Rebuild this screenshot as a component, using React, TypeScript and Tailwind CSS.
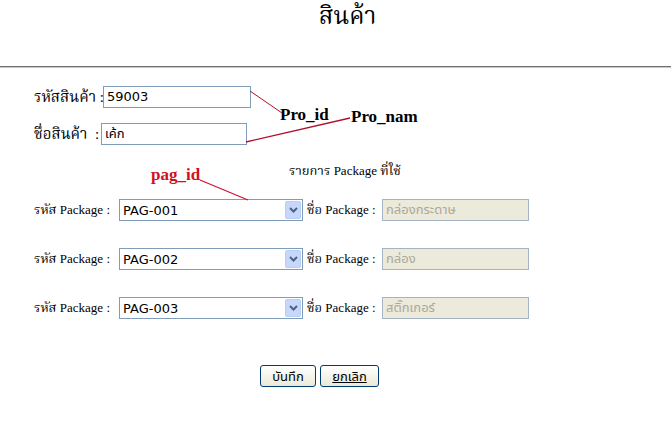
import React from "react";

const thaiSerif = { fontFamily: '"Liberation Serif", "Noto Serif Thai", "Noto Sans Thai", serif' };
const sans = { fontFamily: 'Tahoma, "DejaVu Sans", "Liberation Sans", "Noto Sans Thai", sans-serif' };

function Select({ value }: { value: string }) {
  return (
    <div className="flex items-center w-[184px] h-[22px] border border-[#7f9db9] bg-white pl-[3px] pr-[1px]">
      <span className="flex-1 text-[13px] text-black leading-none" style={sans}>{value}</span>
      <span className="flex items-center justify-center w-[16px] h-[18px] rounded-[2px] border border-[#b9cdf5] bg-[#c6d7fb]">
        <svg width="9" height="6" viewBox="0 0 9 6">
          <path d="M1 1 L4.5 4.5 L8 1" stroke="#4d6185" strokeWidth="2" fill="none" />
        </svg>
      </span>
    </div>
  );
}

function PkgRow({ id, name }: { id: string; name: string }) {
  return (
    <div className="flex items-center h-[22px]">
      <span className="text-[13px] w-[85px] whitespace-nowrap" style={thaiSerif}>รหัส Package :</span>
      <Select value={id} />
      <span className="text-[13px] ml-[4px] w-[75px] whitespace-nowrap" style={thaiSerif}>ชื่อ Package :</span>
      <div
        className="flex items-center w-[147px] h-[22px] border border-[#a4b4c4] bg-[#ebeadb] pl-[3px] text-[13px] text-[#aca899]"
        style={sans}
      >
        {name}
      </div>
    </div>
  );
}

function XpButton({ children, underline, w }: { children: React.ReactNode; underline?: boolean; w: string }) {
  return (
    <button
      className={`${w} h-[22px] rounded-[3px] border border-[#003c74] bg-gradient-to-b from-white to-[#ece9d8] text-[13px] text-black leading-none`}
      style={sans}
    >
      <span className={underline ? "underline" : ""}>{children}</span>
    </button>
  );
}

export default function App() {
  return (
    <div className="relative w-[671px] h-[423px] bg-white text-black overflow-hidden" style={thaiSerif}>
      <div className="h-[66px] pl-[24px] pt-[1px] text-center text-[24px] leading-[30px]">สินค้า</div>
      <div className="h-[2px] border-t border-[#6f6f6f] border-b border-b-[#c8c8c8]" />

      <div className="pl-[34px] pt-[18px]">
        <div className="flex items-center h-[22px]">
          <span className="text-[15px] w-[69px] whitespace-nowrap">รหัสสินค้า :</span>
          <div className="flex items-center w-[148px] h-[22px] border border-[#7f9db9] pl-[3px] text-[13px]" style={sans}>59003</div>
        </div>
        <div className="flex items-center h-[22px] mt-[15px]">
          <span className="text-[15px] w-[67px] whitespace-nowrap">ชื่อสินค้า&nbsp;&nbsp;:</span>
          <div className="flex items-center w-[146px] h-[22px] border border-[#7f9db9] pl-[3px] text-[13px]" style={sans}>เค้ก</div>
        </div>

        <div className="pl-[255px] mt-[16px] text-[13px] h-[20px] leading-[20px]">รายการ Package ที่ใช้</div>

        <div className="mt-[18px] flex flex-col gap-[27px]">
          <PkgRow id="PAG-001" name="กล่องกระดาษ" />
          <PkgRow id="PAG-002" name="กล่อง" />
          <PkgRow id="PAG-003" name="สติ๊กเกอร์" />
        </div>

        <div className="mt-[46px] flex gap-[4px] pl-[226px]">
          <XpButton w="w-[56px]">บันทึก</XpButton>
          <XpButton w="w-[59px]" underline>ยกเลิก</XpButton>
        </div>
      </div>

      {/* annotations */}
      <svg className="absolute left-0 top-0 pointer-events-none" width="671" height="423">
        <line x1="250" y1="91" x2="282" y2="113" stroke="#b0102a" strokeWidth="1" />
        <line x1="246" y1="142" x2="350" y2="118" stroke="#b0102a" strokeWidth="1.3" />
        <line x1="200" y1="180" x2="248" y2="200" stroke="#d01030" strokeWidth="1.2" />
      </svg>
      <span className="absolute left-[280px] top-[106px] text-[17px] font-bold leading-none">Pro_id</span>
      <span className="absolute left-[351px] top-[108px] text-[17px] font-bold leading-none">Pro_nam</span>
      <span className="absolute left-[151px] top-[166px] text-[17px] font-bold leading-none text-[#d01020]">pag_id</span>
    </div>
  );
}
